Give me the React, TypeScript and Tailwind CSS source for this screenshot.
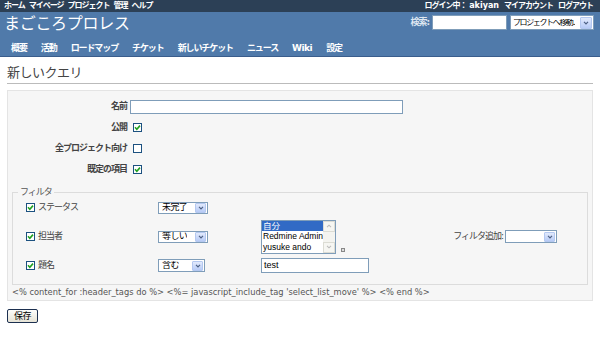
import React from 'react';

const Arrow = ({ big }: { big?: boolean }) => (
  <span
    className={`m-[1px] flex shrink-0 items-center justify-center rounded-[1px] border border-[#b4c8f0] bg-linear-to-b from-[#e2eafc] to-[#b7cbf6] ${
      big ? 'h-[12px] w-[12px]' : 'h-[10px] w-[11px]'
    }`}
  >
    <svg viewBox="0 0 7 5" className="h-[4px] w-[6px]">
      <path d="M1 1 L3.5 3.5 L6 1" stroke="#4d6185" strokeWidth="1.5" fill="none" />
    </svg>
  </span>
);

const SelectBox = ({ text, className }: { text: string; className: string }) => (
  <div className={`flex items-center justify-between border border-[#7f9db9] bg-white pl-[3px] ${className}`}>
    <span className="overflow-hidden whitespace-nowrap text-[9px] leading-none tracking-[-0.6px] text-black">{text}</span>
    <Arrow />
  </div>
);

const Check = ({ checked }: { checked?: boolean }) => (
  <span className="inline-flex h-[9px] w-[9px] shrink-0 items-center justify-center border border-[#1c5180] bg-white">
    {checked && (
      <svg viewBox="0 0 7 7" className="h-[7px] w-[7px]">
        <path d="M1 3.3 L2.8 5.2 L6 1.6" stroke="#21a121" strokeWidth="1.6" fill="none" />
      </svg>
    )}
  </span>
);

export default function App() {
  const tabs = ['概要', '活動', 'ロードマップ', 'チケット', '新しいチケット', 'ニュース', 'Wiki', '設定'];

  return (
    <div className="h-[340px] w-[600px] overflow-hidden bg-white font-['DejaVu_Sans','Noto_Sans_CJK_JP',sans-serif] text-[#333]">
      {/* Top menu */}
      <div className="flex h-[12px] items-center justify-between bg-[#2c4056] px-[4px] text-[8px] font-bold leading-none tracking-[-1px] text-white">
        <div className="flex gap-[4px]">
          <span>ホーム</span>
          <span>マイページ</span>
          <span>プロジェクト</span>
          <span>管理</span>
          <span>ヘルプ</span>
        </div>
        <div className="flex gap-[5px] pr-[3px]">
          <span>
            ログイン中：<span className="tracking-normal"> akiyan</span>
          </span>
          <span>マイアカウント</span>
          <span>ログアウト</span>
        </div>
      </div>

      {/* Header */}
      <div className="border-b border-[#3a5d8c] bg-[#507aaa] pt-[3px]">
        <div className="flex h-[25px] items-start justify-between pl-[4px] pr-[6px]">
          <h1 className="text-[16px] leading-[18px] tracking-[-0.3px] text-white">まごころプロレス</h1>
          <div className="flex items-center">
            <span className="mr-[3px] text-[9px] font-bold tracking-[-1px] text-[#dfe7f1]">検索:</span>
            <div className="h-[15px] w-[75px] border border-[#7f9db9] bg-white" />
            <div className="ml-[3px] flex h-[15px] w-[84px] items-center justify-between border border-[#7f9db9] bg-white pl-[2px]">
              <span className="overflow-hidden whitespace-nowrap text-[8px] leading-none tracking-[-1.4px] text-black">
                プロジェクトへ移動..
              </span>
              <Arrow big />
            </div>
          </div>
        </div>
        <div className="flex h-[16px] items-center gap-[14px] pl-[11px] text-[9px] font-bold leading-none tracking-[-1.1px] text-white">
          {tabs.map((t) => (
            <span key={t} className={t === 'Wiki' ? 'tracking-[-0.5px]' : ''}>
              {t}
            </span>
          ))}
        </div>
      </div>

      {/* Content */}
      <div className="px-[7px]">
        <h2 className="mt-[8px] border-b border-[#bbb] pb-[2px] text-[13px] leading-[16px] tracking-[-0.5px] text-[#444]">
          新しいクエリ
        </h2>

        <div className="mt-[6px] border border-[#e4e4e4] bg-[#f6f6f6] px-[4px] pt-[5px] pb-[2px]">
          {/* Tabular form */}
          <div className="grid grid-cols-[115px_1fr] gap-x-[3px] text-[9px] font-bold tracking-[-1px] text-[#444]">
            <div className="flex h-[21px] items-center justify-end">名前</div>
            <div className="flex h-[21px] items-center">
              <div className="h-[14px] w-[273px] border border-[#7f9db9] bg-white" />
            </div>
            <div className="flex h-[21px] items-center justify-end">公開</div>
            <div className="flex h-[21px] items-center pl-[3px]">
              <Check checked />
            </div>
            <div className="flex h-[21px] items-center justify-end">全プロジェクト向け</div>
            <div className="flex h-[21px] items-center pl-[3px]">
              <Check />
            </div>
            <div className="flex h-[21px] items-center justify-end">既定の項目</div>
            <div className="flex h-[21px] items-center pl-[3px]">
              <Check checked />
            </div>
          </div>

          {/* Filters */}
          <fieldset className="mt-[6px] border border-[#dcdcdc] px-0 pb-[4px]">
            <legend className="ml-[5px] px-[2px] text-[9px] leading-[12px] tracking-[-1px] text-[#555]">フィルタ</legend>
            <div className="-mt-[5px] flex items-center">
              <div className="grid grid-cols-[132px_103px_auto] grid-rows-[29px_29px_29px] items-center pl-[13px] text-[9px] tracking-[-1px] text-[#444]">
                <div className="flex items-center gap-[3px]">
                  <Check checked />
                  <span>ステータス</span>
                </div>
                <SelectBox text="未完了" className="h-[12px] w-[50px]" />
                <div />

                <div className="flex items-center gap-[3px]">
                  <Check checked />
                  <span>担当者</span>
                </div>
                <SelectBox text="等しい" className="h-[12px] w-[50px]" />
                <div className="flex items-end gap-[5px]">
                  <div className="flex h-[34px] w-[75px] overflow-hidden border border-[#7f9db9] bg-white font-['Liberation_Sans','Noto_Sans_CJK_JP',sans-serif] text-[8.5px] leading-[10.6px] tracking-normal text-black">
                    <div className="flex min-w-0 flex-1 flex-col whitespace-nowrap">
                      <span className="bg-[#316ac5] px-[1px] text-white">自分</span>
                      <span className="px-[1px]">Redmine Admin</span>
                      <span className="px-[1px]">yusuke ando</span>
                    </div>
                    <div className="flex w-[12px] shrink-0 flex-col justify-between bg-[#f4f4f0]">
                      <span className="flex h-[11px] items-center justify-center border border-[#dcdcd4] bg-[#f6f6f2]">
                        <svg viewBox="0 0 7 5" className="h-[4px] w-[6px]">
                          <path d="M1 4 L3.5 1.5 L6 4" stroke="#bbb" strokeWidth="1.3" fill="none" />
                        </svg>
                      </span>
                      <span className="flex h-[11px] items-center justify-center border border-[#dcdcd4] bg-[#f6f6f2]">
                        <svg viewBox="0 0 7 5" className="h-[4px] w-[6px]">
                          <path d="M1 1 L3.5 3.5 L6 1" stroke="#bbb" strokeWidth="1.3" fill="none" />
                        </svg>
                      </span>
                    </div>
                  </div>
                  <span className="mb-[2px] h-[4px] w-[4px] border border-[#888] bg-[#ddd]" />
                </div>

                <div className="flex items-center gap-[3px]">
                  <Check checked />
                  <span>題名</span>
                </div>
                <SelectBox text="含む" className="h-[13px] w-[47px]" />
                <div className="flex h-[15px] w-[108px] items-center border border-[#7f9db9] bg-white pl-[2px] font-['Liberation_Sans',sans-serif] text-[9px] tracking-normal text-black">
                  test
                </div>
              </div>

              <div className="ml-auto flex items-center pr-[30px] text-[9px] tracking-[-1px] text-[#444]">
                <span className="mr-[2px]">フィルタ追加:</span>
                <SelectBox text="" className="h-[13px] w-[52px]" />
              </div>
            </div>
          </fieldset>

          <p className="mt-[1px] whitespace-nowrap text-[8.3px] leading-[12px] text-[#555]">
            {"<% content_for :header_tags do %> <%= javascript_include_tag 'select_list_move' %> <% end %>"}
          </p>
        </div>

        <button className="mt-[8px] flex h-[14px] w-[31px] items-center justify-center rounded-[2px] border border-[#1c3050] bg-linear-to-b from-[#fdfdfb] to-[#e6e3d6] text-[9px] leading-none tracking-[-0.5px] text-black">
          保存
        </button>
      </div>
    </div>
  );
}
